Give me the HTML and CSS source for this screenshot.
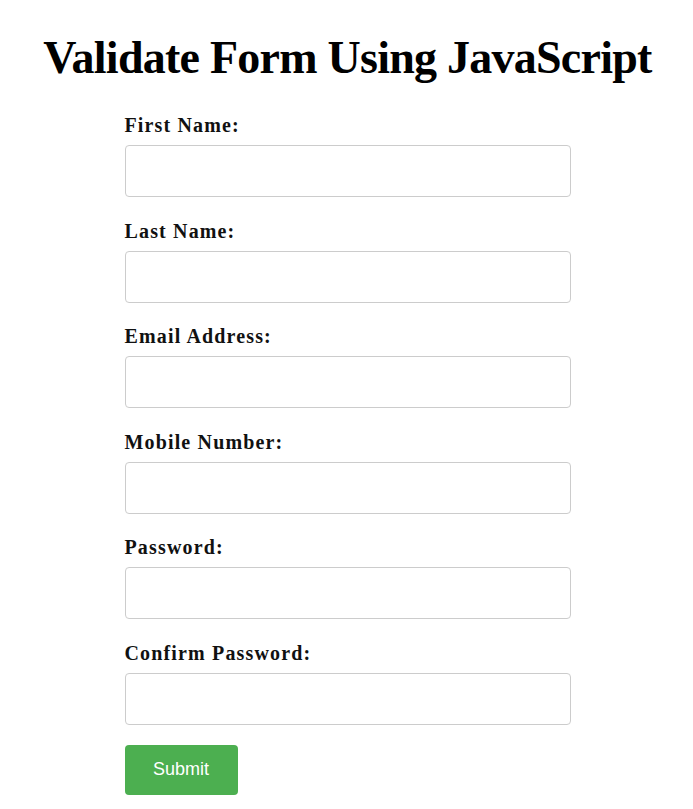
FILE: index.html
```html
<!DOCTYPE html>
<html lang="en">
<head>
<meta charset="UTF-8">
<title>Validate Form Using JavaScript</title>
<link rel="stylesheet" href="styles.css">
</head>
<body>
<h1 class="title">Validate Form Using JavaScript</h1>
<form class="form" onsubmit="return false">
  <div class="group">
    <label class="label" for="fname">First Name:</label>
    <input class="input" type="text" id="fname">
  </div>
  <div class="group">
    <label class="label" for="lname">Last Name:</label>
    <input class="input" type="text" id="lname">
  </div>
  <div class="group">
    <label class="label" for="email">Email Address:</label>
    <input class="input" type="text" id="email">
  </div>
  <div class="group">
    <label class="label" for="mobile">Mobile Number:</label>
    <input class="input" type="text" id="mobile">
  </div>
  <div class="group">
    <label class="label" for="pass">Password:</label>
    <input class="input" type="password" id="pass">
  </div>
  <div class="group group-last">
    <label class="label" for="cpass">Confirm Password:</label>
    <input class="input" type="password" id="cpass">
  </div>
  <button class="submit" type="submit">Submit</button>
</form>
</body>
</html>
```
FILE: styles.css
```css
body {
  margin: 0;
  padding-left: 2px;
  background: #fff;
  font-family: "Liberation Serif", "Times New Roman", serif;
  color: #000;
}
.title {
  font-size: 46px;
  font-weight: bold;
  text-align: center;
  letter-spacing: -0.75px;
  margin: 31px 0 30px;
  line-height: normal;
}
.form {
  width: 446px;
  margin: 0 auto;
  display: flex;
  flex-direction: column;
}
.group {
  display: flex;
  flex-direction: column;
  margin-bottom: 22.6px;
}
.group-last {
  margin-bottom: 20px;
}
.label {
  display: block;
  font-size: 20px;
  font-weight: bold;
  letter-spacing: 1.15px;
  line-height: 23px;
  margin-bottom: 8px;
  color: #111;
}
.input {
  box-sizing: border-box;
  width: 100%;
  height: 52px;
  border: 1px solid #ccc;
  border-radius: 4px;
  padding: 10px;
  font-size: 16px;
  margin: 0;
  background: #fff;
}
.submit {
  align-self: flex-start;
  box-sizing: border-box;
  width: 113px;
  height: 50px;
  background: #4caf50;
  color: #fff;
  border: none;
  border-radius: 4px;
  font-family: "Liberation Sans", Arial, sans-serif;
  font-size: 18px;
  cursor: pointer;
  padding: 0;
}
```
